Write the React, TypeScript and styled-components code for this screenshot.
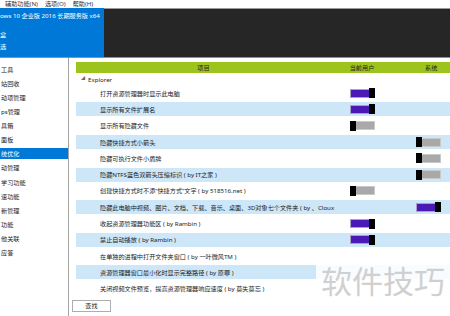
import React from 'react';
import styled, { createGlobalStyle } from 'styled-components';

const GlobalStyle = createGlobalStyle`
  html, body { margin: 0; padding: 0; background: #fff; }
  body {
    width: 450px; height: 316px; overflow: hidden;
    font-family: "Noto Sans", "Noto Sans CJK SC", sans-serif;
  }
  * { box-sizing: border-box; }
`;

const Page = styled.div`
  position: relative;
  width: 450px;
  height: 316px;
  overflow: hidden;
  display: flex;
  flex-direction: column;
  font-size: 6.15px;
  color: #1e1e1e;
`;

const MenuBar = styled.div`
  height: 8px;
  display: flex;
  align-items: center;
  gap: 7px;
  padding-left: 5px;
  line-height: 8px;
  color: #333;
  background: #fff;
`;

const Header = styled.div`
  height: 50px;
  display: flex;
  border-bottom: 1px solid #5d9ed3;
`;

const Brand = styled.div`
  width: 104px;
  background: #0078d7;
  color: #fff;
  display: flex;
  flex-direction: column;
  padding-top: 4px;
  line-height: 8px;
  white-space: nowrap;
  overflow: hidden;
`;

const BrandLine = styled.div<{ $mt?: number }>`
  margin-top: ${(p) => p.$mt ?? 0}px;
`;

const DarkPane = styled.div`
  flex: 1;
  background: #262626;
  border-top: 1px solid #9a9a9a;
`;

const Body = styled.div`
  flex: 1;
  display: flex;
  min-height: 0;
`;

const Sidebar = styled.div`
  width: 69px;
  border-right: 1px solid #a3a3a3;
  padding-top: 5.5px;
  display: flex;
  flex-direction: column;
  gap: 3.15px;
`;

const NavItem = styled.div<{ $active?: boolean }>`
  height: 11px;
  line-height: 11px;
  white-space: nowrap;
  overflow: hidden;
  padding-left: 1px;
  color: ${(p) => (p.$active ? '#fff' : '#222')};
  background: ${(p) => (p.$active ? '#0078d7' : 'transparent')};
`;

const Content = styled.div`
  flex: 1;
  display: flex;
  flex-direction: column;
  padding: 4px 0 0 3px;
  min-width: 0;
`;

const Table = styled.div`
  margin-left: 4px;
  display: flex;
  flex-direction: column;
`;

const HeadRow = styled.div`
  display: grid;
  grid-template-columns: 255px 62px 1fr;
  height: 11px;
  align-items: center;
  background: #9cc41c;
  color: #222;
`;

const HeadCell = styled.div<{ $pad?: number; $center?: boolean }>`
  text-align: ${(p) => (p.$center ? 'center' : 'left')};
  padding-left: ${(p) => p.$pad ?? 0}px;
`;

const GroupRow = styled.div`
  height: 12px;
  display: flex;
  align-items: center;
  padding-left: 5px;
  gap: 3px;
  color: #222;
`;

const Caret = styled.span`
  font-size: 4px;
  color: #666;
  line-height: 1;
`;

const Row = styled.div<{ $alt?: boolean }>`
  display: grid;
  grid-template-columns: 255px 62px 1fr;
  height: 16.3px;
  padding: 1.2px 0;
  align-items: center;
  background: ${(p) => (p.$alt ? '#cde6f8' : 'transparent')};
  background-clip: content-box;
`;

const Label = styled.div`
  padding-left: 24px;
  white-space: nowrap;
  color: #222;
`;

const Cell = styled.div<{ $indent?: number }>`
  display: flex;
  justify-content: ${(p) => (p.$indent !== undefined ? 'flex-start' : 'center')};
  padding-left: ${(p) => p.$indent ?? 0}px;
`;

const Toggle = styled.div<{ $on: boolean }>`
  width: 25px;
  height: 9px;
  display: flex;
  align-items: center;
  justify-content: ${(p) => (p.$on ? 'flex-end' : 'flex-start')};
  border: 1px solid ${(p) => (p.$on ? '#a99fcf' : '#c9c9c9')};
  background: ${(p) => (p.$on ? '#4a19b6' : '#a9a9a9')};
`;

const Knob = styled.div`
  width: 6px;
  height: 10px;
  margin: 0 -1px;
  background: #000;
  flex: none;
`;

const Button = styled.button`
  margin-top: 3px;
  width: 39px;
  height: 12px;
  padding: 0;
  border: 1px solid #adadad;
  background: #fff;
  font: inherit;
  color: #222;
  line-height: 10px;
`;

const Watermark = styled.div`
  position: absolute;
  left: 316px;
  top: 257px;
  width: 134px;
  height: 45px;
  background: rgba(255, 255, 255, 0.88);
  color: #d0d0d0;
  font-family: "Noto Sans CJK SC", sans-serif;
  font-size: 31px;
  line-height: 45px;
  text-align: center;
  white-space: nowrap;
`;

const navItems = [
  '工具', '站回收', '动项管理', 'ps管理', '具箱', '面板', '统优化',
  '动管理', '学习功能', '速功能', '新管理', '功能', '他关联', '应答',
];

type Item = { label: string; user?: boolean; sys?: boolean };

const items: Item[] = [
  { label: '打开资源管理器时显示此电脑', user: true },
  { label: '显示所有文件扩展名', user: true },
  { label: '显示所有隐藏文件', user: false },
  { label: '隐藏快捷方式小箭头', sys: false },
  { label: '隐藏可执行文件小盾牌', sys: false },
  { label: '隐藏NTFS蓝色双箭头压缩标识 ( by IT之家 )', sys: false },
  { label: '创建快捷方式时不添“快捷方式”文字 ( by 518516.net )', user: false },
  { label: '隐藏此电脑中视频、图片、文档、下载、音乐、桌面、3D对象七个文件夹 ( by 、Cloux', sys: true },
  { label: '收起资源管理器功能区 ( by Rambin )', user: true },
  { label: '禁止自动播放 ( by Rambin )', user: true },
  { label: '在单独的进程中打开文件夹窗口 ( by 一叶微风TM )' },
  { label: '资源管理器窗口最小化时显示完整路径 ( by 原罪 )' },
  { label: '关闭视频文件预览，提高资源管理器响应速度 ( by 莫失莫忘 )' },
];

const Switch = ({ on }: { on: boolean }) => (
  <Toggle $on={on}>
    <Knob />
  </Toggle>
);

export default function App() {
  return (
    <>
      <GlobalStyle />
      <Page>
        <MenuBar>
          <span>辅助功能(N)</span>
          <span>选项(O)</span>
          <span>帮助(H)</span>
        </MenuBar>
        <Header>
          <Brand>
            <BrandLine>ows 10 企业版 2016 长期服务版 x64</BrandLine>
            <BrandLine $mt={11}>盒</BrandLine>
            <BrandLine $mt={4}>选</BrandLine>
          </Brand>
          <DarkPane />
        </Header>
        <Body>
          <Sidebar>
            {navItems.map((n, i) => (
              <NavItem key={n} $active={i === 6}>
                {n}
              </NavItem>
            ))}
          </Sidebar>
          <Content>
            <Table>
              <HeadRow>
                <HeadCell $center>项目</HeadCell>
                <HeadCell $center>当前用户</HeadCell>
                <HeadCell $pad={32}>系统</HeadCell>
              </HeadRow>
              <GroupRow>
                <Caret>◢</Caret>
                <span>Explorer</span>
              </GroupRow>
              {items.map((it, i) => (
                <Row key={it.label} $alt={i % 2 === 1}>
                  <Label>{it.label}</Label>
                  <Cell>{it.user !== undefined && <Switch on={it.user} />}</Cell>
                  <Cell $indent={23}>{it.sys !== undefined && <Switch on={it.sys} />}</Cell>
                </Row>
              ))}
            </Table>
            <Button>查找</Button>
          </Content>
        </Body>
        <Watermark>软件技巧</Watermark>
      </Page>
    </>
  );
}
